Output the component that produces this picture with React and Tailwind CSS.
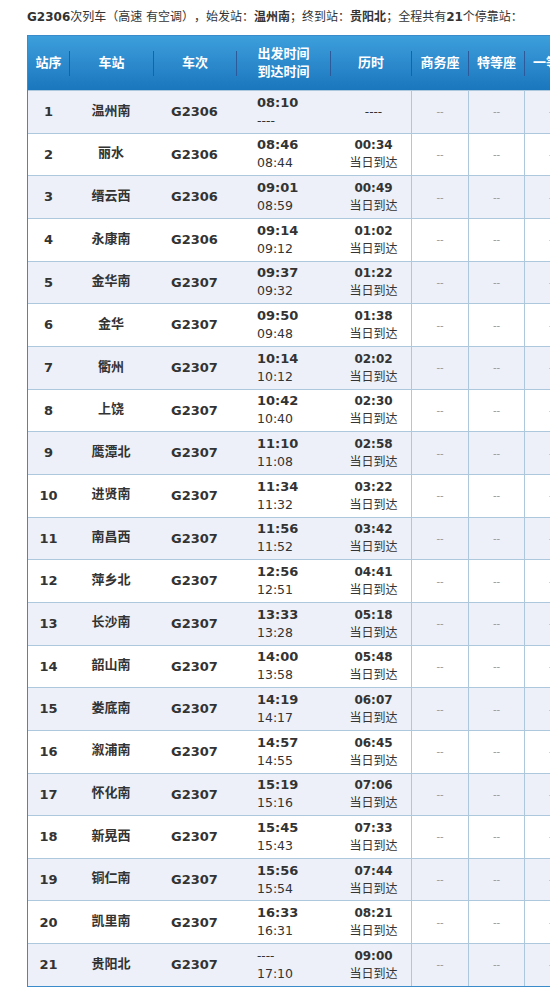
import React from 'react';

const stops = [
  ['1', '温州南', 'G2306', '08:10', '----', '----', ''],
  ['2', '丽水', 'G2306', '08:46', '08:44', '00:34', '当日到达'],
  ['3', '缙云西', 'G2306', '09:01', '08:59', '00:49', '当日到达'],
  ['4', '永康南', 'G2306', '09:14', '09:12', '01:02', '当日到达'],
  ['5', '金华南', 'G2307', '09:37', '09:32', '01:22', '当日到达'],
  ['6', '金华', 'G2307', '09:50', '09:48', '01:38', '当日到达'],
  ['7', '衢州', 'G2307', '10:14', '10:12', '02:02', '当日到达'],
  ['8', '上饶', 'G2307', '10:42', '10:40', '02:30', '当日到达'],
  ['9', '鹰潭北', 'G2307', '11:10', '11:08', '02:58', '当日到达'],
  ['10', '进贤南', 'G2307', '11:34', '11:32', '03:22', '当日到达'],
  ['11', '南昌西', 'G2307', '11:56', '11:52', '03:42', '当日到达'],
  ['12', '萍乡北', 'G2307', '12:56', '12:51', '04:41', '当日到达'],
  ['13', '长沙南', 'G2307', '13:33', '13:28', '05:18', '当日到达'],
  ['14', '韶山南', 'G2307', '14:00', '13:58', '05:48', '当日到达'],
  ['15', '娄底南', 'G2307', '14:19', '14:17', '06:07', '当日到达'],
  ['16', '溆浦南', 'G2307', '14:57', '14:55', '06:45', '当日到达'],
  ['17', '怀化南', 'G2307', '15:19', '15:16', '07:06', '当日到达'],
  ['18', '新晃西', 'G2307', '15:45', '15:43', '07:33', '当日到达'],
  ['19', '铜仁南', 'G2307', '15:56', '15:54', '07:44', '当日到达'],
  ['20', '凯里南', 'G2307', '16:33', '16:31', '08:21', '当日到达'],
  ['21', '贵阳北', 'G2307', '----', '17:10', '09:00', '当日到达'],
];

// 座位列（右侧超出视口部分被裁掉）
const seats = [
  ['商务座', 'w-[57px]'],
  ['特等座', 'w-[56px]'],
  ['一等座', 'w-[56px]'],
  ['二等座', 'w-[56px]'],
];

function HeadCell({ width, first, children }) {
  return (
    <div className={`${width} flex items-center shrink-0`}>
      {!first && <span className="w-px h-[25px] bg-[#2c5a9a]" />}
      <span className="flex-1 text-center leading-[18px]">{children}</span>
    </div>
  );
}

export default function App() {
  return (
    <div className="w-[550px] h-[992px] overflow-hidden bg-white text-[#333] font-['DejaVu_Sans','Noto_Sans_CJK_SC',sans-serif]">
      {/* 标题 */}
      <p className="h-[35px] pl-[27px] pt-[8px] text-[12px] leading-[18px] whitespace-nowrap [text-spacing-trim:space-all]">
        <b>G2306</b>次列车（高速 有空调），始发站：<b>温州南</b>；终到站：<b>贵阳北</b>；全程共有<b>21</b>个停靠站：
      </p>

      <div className="ml-[27px] w-[760px] border border-[#3a8bca]">
        {/* 表头 */}
        <div className="h-[54px] flex bg-linear-to-b from-[#3d9fdc] to-[#1a76bd] text-white font-bold text-[13px]">
          <HeadCell width="w-[41px]" first>站序</HeadCell>
          <HeadCell width="w-[84px]">车站</HeadCell>
          <HeadCell width="w-[83px]">车次</HeadCell>
          <HeadCell width="w-[94px]">
            出发时间
            <br />
            到达时间
          </HeadCell>
          <HeadCell width="w-[81px]">历时</HeadCell>
          {seats.map(([s, w]) => (
            <HeadCell key={s} width={w}>{s}</HeadCell>
          ))}
        </div>

        {/* 停靠站 */}
        {stops.map(([no, name, train, dep, arr, dur, note], i) => (
          <div
            key={no}
            className={`h-[42.67px] flex border-t border-[#adc8dd] ${i % 2 === 0 ? 'bg-[#edf0f8]' : 'bg-white'}`}
          >
            <div className="w-[41px] shrink-0 flex items-center justify-center font-bold text-[13px]">{no}</div>
            <div className="w-[84px] shrink-0 flex items-center justify-center font-bold text-[13px] pb-[3px]">{name}</div>
            <div className="w-[83px] shrink-0 flex items-center justify-center font-bold text-[13px]">{train}</div>
            <div className="w-[94px] shrink-0 flex flex-col justify-center pl-[21px] leading-[18px]">
              <span className={dep === '----' ? 'text-[12px]' : 'font-bold text-[13px]'}>{dep}</span>
              <span className="text-[12.5px]">{arr}</span>
            </div>
            <div className="w-[81px] shrink-0 flex flex-col justify-center items-center pl-[6px] leading-[18px]">
              <span className={note ? 'font-bold text-[12px]' : 'text-[12px]'}>{dur}</span>
              {note && <span className="text-[12px]">{note}</span>}
            </div>
            {seats.map(([s, w]) => (
              <div
                key={s}
                className={`${w} shrink-0 flex items-center justify-center border-l border-[#adc8dd] text-[10px] text-[#999]`}
              >
                --
              </div>
            ))}
          </div>
        ))}
      </div>
    </div>
  );
}
